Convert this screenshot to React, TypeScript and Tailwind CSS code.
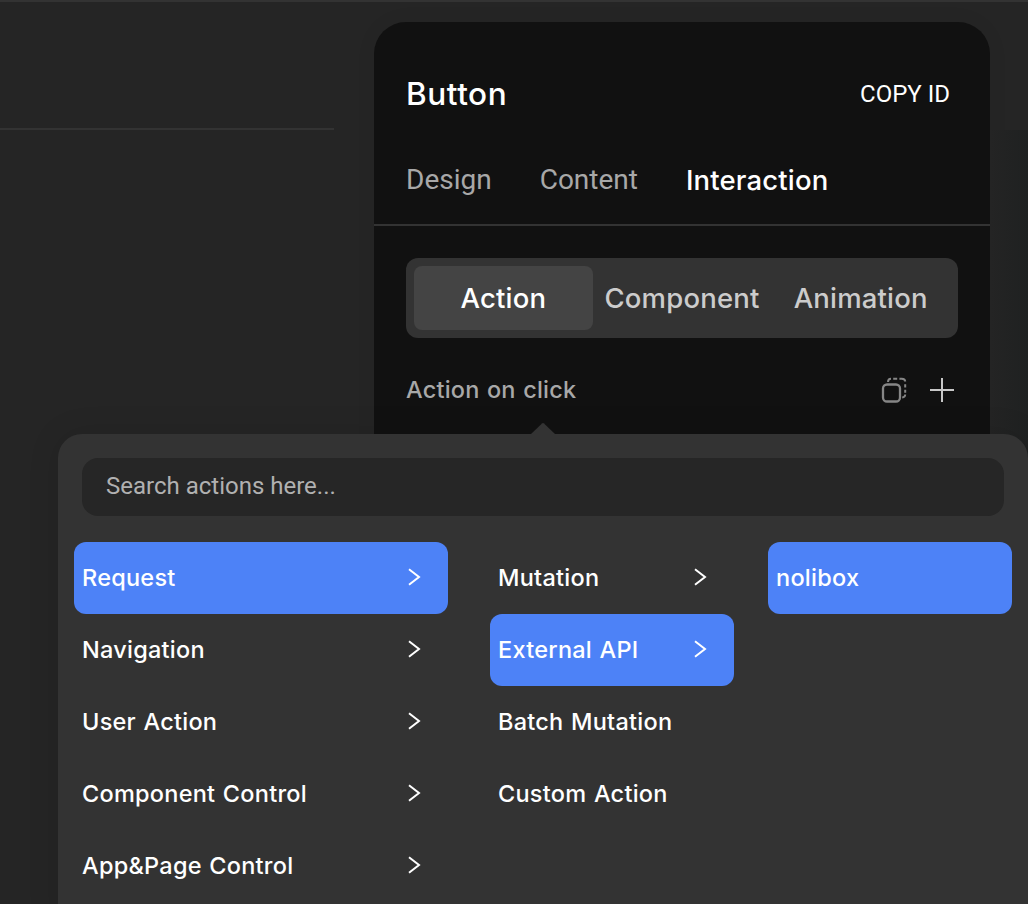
interface MenuEntry {
  label: string;
  active?: boolean;
  children?: boolean;
}

const categories: MenuEntry[] = [
  { label: 'Request', active: true, children: true },
  { label: 'Navigation', children: true },
  { label: 'User Action', children: true },
  { label: 'Component Control', children: true },
  { label: 'App&Page Control', children: true },
];

const requests: MenuEntry[] = [
  { label: 'Mutation', children: true },
  { label: 'External API', active: true, children: true },
  { label: 'Batch Mutation' },
  { label: 'Custom Action' },
];

const apis: MenuEntry[] = [{ label: 'nolibox', active: true }];

function Chevron() {
  return (
    <svg className="mr-[27px] mb-0.5 h-[18px] w-[14px] shrink-0" viewBox="0 0 14 18" fill="none" stroke="white" strokeWidth="2">
      <path d="M2 1.2 12 9 2 16.8" />
    </svg>
  );
}

function MenuColumn({ entries, width }: { entries: MenuEntry[]; width: string }) {
  return (
    <ul className={`flex shrink-0 flex-col ${width}`}>
      {entries.map((e) => (
        <li
          key={e.label}
          className={`flex h-[72px] items-center justify-between rounded-xl pl-2 ${e.active ? 'bg-[#4d82f7]' : ''}`}
        >
          <span className="text-[23.5px] leading-8 font-[550] tracking-[0.25px] whitespace-nowrap text-white [word-spacing:1px]">
            {e.label}
          </span>
          {e.children && <Chevron />}
        </li>
      ))}
    </ul>
  );
}

function DuplicateIcon() {
  return (
    <svg className="size-7" viewBox="0 0 28 28" fill="none" stroke="#868686" strokeWidth="2.3">
      <rect x="3" y="8.5" width="17" height="17" rx="4" />
      <path
        d="M8 6C8 4 9 2.7 11 2.7M13.2 2.7H17.2M19.4 2.7H21.7C23.9 2.7 25.2 3.5 25.2 5.5M25.2 8.3V11.5M25.2 13.7V16.7M25.2 18.5C25.2 20.3 24.2 21.3 22.2 21.5"
        strokeWidth="2"
      />
    </svg>
  );
}

function PlusIcon() {
  return (
    <svg className="size-6" viewBox="0 0 24 24" stroke="#c8c8c8" strokeWidth="2">
      <path d="M12 0V24M0 12H24" />
    </svg>
  );
}

function ActionMenu() {
  return (
    <div className="absolute top-[432px] left-[58px] h-[500px] w-[970px] rounded-3xl bg-[#333333] px-4 pt-6 shadow-[0_0_32px_rgba(0,0,0,0.1)]">
      <svg className="absolute -top-[11px] left-[473px] h-[11px] w-6" viewBox="0 0 24 11" fill="#333333">
        <path d="M0 11 11 .5Q12 -.4 13 .5L24 11Z" />
      </svg>
      <div className="mx-2 flex h-[58px] items-center rounded-2xl bg-[#262626] px-6">
        <input
          className="w-full bg-transparent pb-0.5 font-['Roboto',sans-serif] text-2xl text-white outline-none placeholder:text-[#b1b1b1]"
          placeholder="Search actions here..."
        />
      </div>
      <div className="mt-[26px] flex">
        <MenuColumn entries={categories} width="w-[374px]" />
        <div className="ml-[42px]">
          <MenuColumn entries={requests} width="w-[244px]" />
        </div>
        <div className="ml-[34px]">
          <MenuColumn entries={apis} width="w-[244px]" />
        </div>
      </div>
    </div>
  );
}

function Inspector() {
  return (
    <section className="mt-5 ml-10 h-[882px] w-[616px] shrink-0 rounded-[32px] bg-[#111111] shadow-[0_0_24px_rgba(0,0,0,0.04)]">
      <header className="flex h-[144px] items-center justify-between pr-10 pl-8">
        <h1 className="text-[31.5px] leading-10 font-medium tracking-[0.55px] text-white">Button</h1>
        <button className="font-['Roboto',sans-serif] text-2xl text-white">COPY ID</button>
      </header>
      <nav className="-mt-2 flex h-[68px] items-start gap-12 border-b-2 border-[#333333] pl-8 font-['Roboto',sans-serif] text-[28px] leading-[44px] text-[#a8a8a8]">
        <span>Design</span>
        <span>Content</span>
        <span className="font-['Inter',sans-serif] text-[27.5px] leading-[44px] font-[550] tracking-[0.15px] text-white">
          Interaction
        </span>
      </nav>
      <div className="mx-8 mt-8 grid h-20 grid-cols-3 rounded-xl bg-[#333333] p-2 text-[27.5px] leading-10 font-medium tracking-[0.18px] text-[#cccccc]">
        <button className="rounded-lg bg-[#444444] text-white">Action</button>
        <button>Component</button>
        <button>Animation</button>
      </div>
      <div className="mt-8 flex h-10 items-center justify-between pr-9 pl-8">
        <span className="text-[23.5px] leading-8 font-medium tracking-[0.2px] text-[#a8a8a8] [word-spacing:1px]">
          Action on click
        </span>
        <div className="flex items-center gap-[22px]">
          <DuplicateIcon />
          <PlusIcon />
        </div>
      </div>
    </section>
  );
}

export default function App() {
  return (
    <div className="relative flex h-[904px] w-[1028px] overflow-hidden border-t-2 border-[#333333] bg-[#252525] font-['Inter',sans-serif]">
      <div className="h-[128px] w-[334px] shrink-0 border-b-2 border-[#333333]" />
      <Inspector />
      <div className="mt-[128px] flex-1 bg-linear-to-r from-[#242424] to-[#1f2121]" />
      <ActionMenu />
    </div>
  );
}
